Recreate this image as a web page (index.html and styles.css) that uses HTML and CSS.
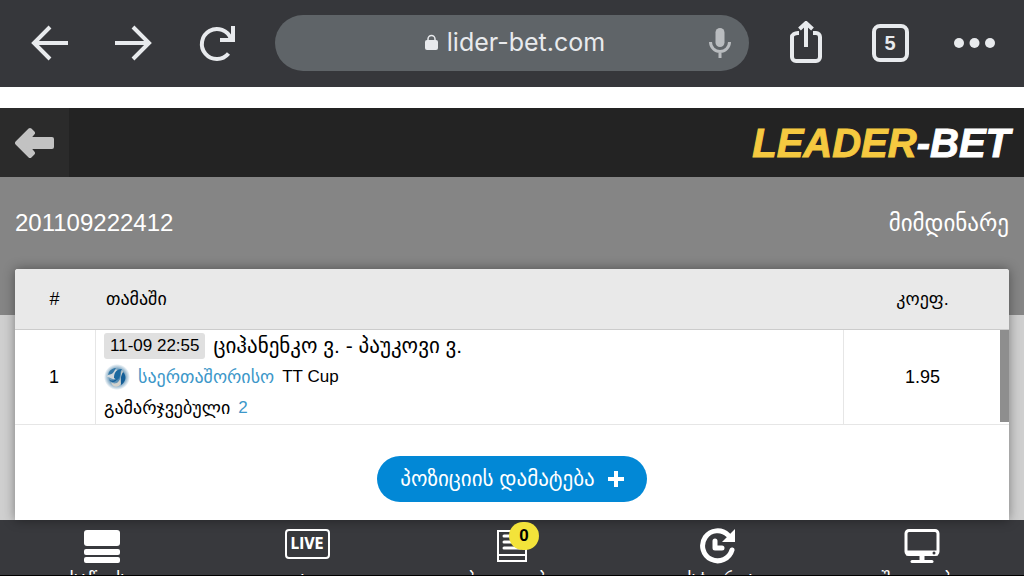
FILE: index.html
```html
<!DOCTYPE html>
<html lang="ka">
<head>
<meta charset="utf-8">
<meta name="viewport" content="width=device-width, initial-scale=1">
<title>Leader-Bet</title>
<link rel="stylesheet" href="styles.css">
</head>
<body>
<div class="toolbar">
  <button class="tool" type="button" aria-label="Back"><svg width="44" height="44" viewBox="0 0 44 44" fill="none" stroke="currentColor" stroke-width="4"><path d="M41 22H7M23 6L7 22l16 16"/></svg></button>
  <button class="tool" type="button" aria-label="Forward"><svg width="44" height="44" viewBox="0 0 44 44" fill="none" stroke="currentColor" stroke-width="4"><path d="M4 22h34M22 6l16 16-16 16"/></svg></button>
  <button class="tool" type="button" aria-label="Reload"><svg width="44" height="44" viewBox="0 0 44 44" fill="none" stroke="currentColor" stroke-width="4"><path d="M33.500 32.500A15 15 0 1 1 36 18M38 5v14H25"/></svg></button>
  <div class="address">
    <a class="address-link" href="#"><svg width="13" height="16" viewBox="0 0 13 16"><path d="M3 7V5a3.500 3.500 0 0 1 7 0v2" fill="none" stroke="currentColor" stroke-width="1.500"/><rect y="6" width="13" height="10" rx="2" fill="currentColor"/></svg><span>lider-bet.com</span></a>
    <button class="voice" type="button" aria-label="Voice search"><svg width="24" height="32" viewBox="0 0 24 32" fill="none" stroke="currentColor" stroke-width="3"><rect x="7.500" y="1" width="9" height="19" rx="4.500" fill="currentColor" stroke="none"/><path d="M2.500 15a9.500 9.500 0 0 0 19 0M12 24v7"/></svg></button>
  </div>
  <button class="tool" type="button" aria-label="Share"><svg width="44" height="44" viewBox="0 0 44 44" fill="none" stroke="currentColor" stroke-width="4"><path d="M15 12h-1a6 4 0 0 0-6 4v20a4 4 0 0 0 4 4h20a4 4 0 0 0 4-4V16a4 4 0 0 0-4-4h-3M22 26V2M15.500 8L22 2l6.500 6"/></svg></button>
  <button class="tool" type="button" aria-label="5 tabs"><span class="tabs">5</span></button>
  <button class="tool" type="button" aria-label="Menu"><svg width="44" height="44" viewBox="0 0 44 44" fill="currentColor"><circle cx="7" cy="22" r="5"/><circle cx="22.500" cy="22" r="5"/><circle cx="38" cy="22" r="5"/></svg></button>
</div>

<header class="site-header">
  <button class="site-back" type="button" aria-label="უკან"><svg width="40" height="32" viewBox="0 0 40 32" fill="currentColor" stroke="currentColor" stroke-linejoin="round"><path d="M2 16L15 3l3 3-5 6h24v8H13l5 6-3 3z" stroke-width="4"/></svg></button>
  <a class="logo" href="#">LEADER<span class="logo-light">-BET</span></a>
</header>

<main class="page">
  <div class="ticket-head">
    <h1 class="ticket-id">201109222412</h1>
    <span class="ticket-state">მიმდინარე</span>
  </div>
  <section class="card">
    <table class="bets">
      <thead>
        <tr><th class="col-num">#</th><th class="col-game">თამაში</th><th class="col-odd">კოეფ.</th></tr>
      </thead>
      <tbody>
        <tr>
          <td class="col-num">1</td>
          <td class="col-game">
            <div class="line match"><time class="date">11-09 22:55</time><span>ციჰანენკო ვ. - პაუკოვი ვ.</span></div>
            <div class="line"><svg class="globe" width="26" height="26" viewBox="0 0 26 26"><defs><radialGradient id="ball"><stop offset="0" stop-color="#3f7fae"/><stop offset=".6" stop-color="#6f9cbb"/><stop offset="1" stop-color="#fff"/></radialGradient></defs><circle cx="13" cy="13" r="13" fill="url(#ball)"/><path d="M3 13C5 5 12 4 16 7c-4 3-1 6-5 8-3 1-5-2-8-2z" fill="#d2d8dc"/><path d="M4 11c1-5 5-7 8-7-2 3-2 6-8 7z" fill="#3478a6"/><path d="M10 14c0-5 2-9 8-9-3 3 0 8-5 11z" fill="#1c699f"/><path d="M18 6c-2 5 0 9-5 13-3 1-5 0-6-1 1 5 6 6 9 3 4-4 5-10 2-15z" fill="#d4d2cc"/><path d="M19 8c4 4 3 10-2 13 0-5-1-8 2-13zM5 15c2 3 6 1 8 0-1 3-4 4-7 2z" fill="#145e97"/></svg><span class="accent name">საერთაშორისო</span><span>TT Cup</span></div>
            <div class="line"><span class="name">გამარჯვებული</span><span class="accent">2</span></div>
          </td>
          <td class="col-odd">1.95</td>
        </tr>
      </tbody>
    </table>
    <button class="add" type="button"><span>პოზიციის დამატება</span><svg width="16" height="16" viewBox="0 0 16 16"><path d="M8 2v12M2 8h12" stroke="currentColor" stroke-width="4" stroke-linecap="square"/></svg></button>
  </section>
</main>

<nav class="bottom-nav">
  <a class="nav-item" href="#"><svg class="nav-icon" width="36" height="36" viewBox="0 0 36 36" fill="currentColor"><rect y="2" width="36" height="16" rx="3"/><rect y="21" width="36" height="6" rx="2"/><rect y="29" width="36" height="6" rx="2"/></svg><span>საწყისი</span></a>
  <a class="nav-item" href="#"><span class="nav-icon"><span class="live">LIVE</span></span><span>ლაივი</span></a>
  <a class="nav-item" href="#"><span class="nav-icon"><svg width="30" height="36" viewBox="0 0 30 36" fill="none" stroke="currentColor" stroke-width="2"><path d="M1 3h28v30H1zM1 27h28"/><path d="M7 8h16M7 14h16M7 20h16" stroke-width="3" stroke-linecap="round"/></svg><span class="badge">0</span></span><span>ბილეთები</span></a>
  <a class="nav-item" href="#"><svg class="nav-icon" width="36" height="36" viewBox="0 0 36 36" fill="none" stroke="currentColor" stroke-width="5"><path d="M33 22A15 15 0 1 1 29 7" stroke-linecap="round"/><path d="M36 1v13H23z" fill="currentColor" stroke="none"/><path d="M16 13v7h7" stroke-width="5" stroke-linecap="round" stroke-linejoin="round"/></svg><span>ისტორია</span></a>
  <a class="nav-item" href="#"><svg class="nav-icon" width="36" height="36" viewBox="0 0 36 36" fill="none" stroke="currentColor"><rect x="2" y="2.500" width="32" height="24" rx="3" stroke-width="3"/><path d="M2 25h32M18 26v6" stroke-width="5"/><path d="M8 33.500h20" stroke-width="3" stroke-linecap="round"/><circle cx="30" cy="25" r="1.500" fill="#38393d" stroke="none"/></svg><span>შედეგები</span></a>
</nav>
</body>
</html>
```

FILE: styles.css
```css
* {
  box-sizing: border-box;
}

body {
  margin: 0;
  height: 100vh;
  display: flex;
  flex-direction: column;
  overflow: hidden;
  background: #fff;
  color: #000;
  font-family: "Liberation Sans", "DejaVu Sans", sans-serif;
  font-size: 18px;
}

button {
  border: 0;
  padding: 0;
  background: none;
  color: inherit;
  font: inherit;
  display: flex;
  align-items: center;
  justify-content: center;
}

a {
  color: inherit;
  text-decoration: none;
}

svg {
  display: block;
  flex: none;
}

.toolbar {
  flex: none;
  display: flex;
  align-items: center;
  padding: 15px 8px 16px 7px;
  margin-bottom: 21px;
  background: #36373b;
  color: #e8eaed;
}

.tool {
  flex: none;
  width: 84px;
  height: 56px;
}

.tabs {
  width: 37px;
  height: 38px;
  border: 4px solid;
  border-radius: 8px;
  font: bold 20px/30px "Liberation Sans", sans-serif;
}

.address {
  flex: 1;
  display: flex;
  align-items: center;
  height: 56px;
  margin: 0 15px 0 16px;
  padding-right: 16px;
  border-radius: 28px;
  background: #5f6468;
}

.address-link {
  flex: 1;
  display: flex;
  align-items: center;
  justify-content: center;
  gap: 9px;
  padding: 0 0 2px 48px;
  font: 25px/32px Inter, sans-serif;
}

.voice {
  width: 26px;
  color: #b9bcbf;
}

.site-header {
  flex: none;
  display: flex;
  align-items: center;
  justify-content: space-between;
  height: 69px;
  padding-right: 14px;
  background: #232323;
}

.site-back {
  width: 69px;
  height: 69px;
  background: #2b2b2b;
  color: #c2c2c2;
}

.logo {
  color: #f5c940;
  font: italic bold 40px/44px "Liberation Sans", sans-serif;
  -webkit-text-stroke: 1px currentColor;
}

.logo-light {
  color: #fff;
}

.page {
  flex: 1;
  min-height: 0;
  display: flex;
  flex-direction: column;
  padding: 0 15px;
  background: linear-gradient(#858585 138px, #cfcfcf 138px);
}

.ticket-head {
  flex: none;
  display: flex;
  align-items: center;
  justify-content: space-between;
  height: 92px;
  color: #fff;
}

.ticket-id {
  margin: 0;
  font-size: 24px;
  font-weight: normal;
}

.ticket-state {
  font-size: 23px;
}

.card {
  flex: 1;
  position: relative;
  border-radius: 3px 3px 0 0;
  background: #fff;
  box-shadow: 0 0 12px rgba(0, 0, 0, 0.4);
}

.card::after {
  content: "";
  position: absolute;
  top: 61px;
  right: 0;
  width: 9px;
  height: 92px;
  background: #8e8e8e;
}

.bets {
  width: 100%;
  table-layout: fixed;
  border-collapse: separate;
  border-spacing: 0;
}

.bets th {
  height: 61px;
  padding: 0;
  border-bottom: 1px solid #ccc;
  background: #e9e9e9;
  font-weight: normal;
}

.bets th:first-child {
  border-top-left-radius: 3px;
}

.bets th:last-child {
  border-top-right-radius: 3px;
}

.bets td {
  height: 95px;
  padding: 0;
  border-bottom: 1px solid #e6e6e6;
}

.bets .col-num {
  width: 81px;
  padding-right: 2px;
  text-align: center;
}

.bets .col-game {
  text-align: left;
  padding-left: 8px;
}

.bets th.col-game {
  padding-left: 10px;
}

.bets .col-odd {
  width: 165px;
  padding-right: 8px;
  text-align: center;
}

td.col-num,
td.col-game {
  border-right: 1px solid #e6e6e6;
}

.line {
  display: flex;
  align-items: center;
  gap: 8px;
  height: 31px;
  font-size: 17px;
}

.name {
  font-size: 18px;
}

.match {
  font-size: 21px;
}

.date {
  padding: 0 6px;
  border-radius: 3px;
  background: #e0e0e0;
  font-size: 17px;
  line-height: 26px;
}

.accent {
  color: #3c97c9;
}

.add {
  gap: 13px;
  height: 46px;
  margin: 31px auto 0;
  padding: 0 23px;
  border-radius: 23px;
  background: #0288d6;
  color: #fff;
  font-size: 21px;
}

.bottom-nav {
  flex: none;
  display: flex;
  height: 56px;
  overflow: hidden;
  border-bottom: 1px solid #000;
  background: #38393d;
  color: #fff;
}

.nav-item {
  flex: 1;
  display: flex;
  flex-direction: column;
  align-items: center;
  gap: 5px;
  padding-top: 8px;
  font-size: 18px;
  line-height: 20px;
}

.nav-icon {
  position: relative;
  flex: none;
  height: 36px;
}

.live {
  display: block;
  padding: 0 4px;
  margin-top: 1px;
  border: 2px solid;
  border-radius: 4px;
  font: bold 15px/26px "DejaVu Sans Condensed", "DejaVu Sans", sans-serif;
}

.badge {
  position: absolute;
  top: -6px;
  left: 12px;
  width: 30px;
  border-radius: 14px;
  background: #f3e33a;
  color: #000;
  font: bold 17px/28px "Liberation Sans", sans-serif;
  text-align: center;
}
```
